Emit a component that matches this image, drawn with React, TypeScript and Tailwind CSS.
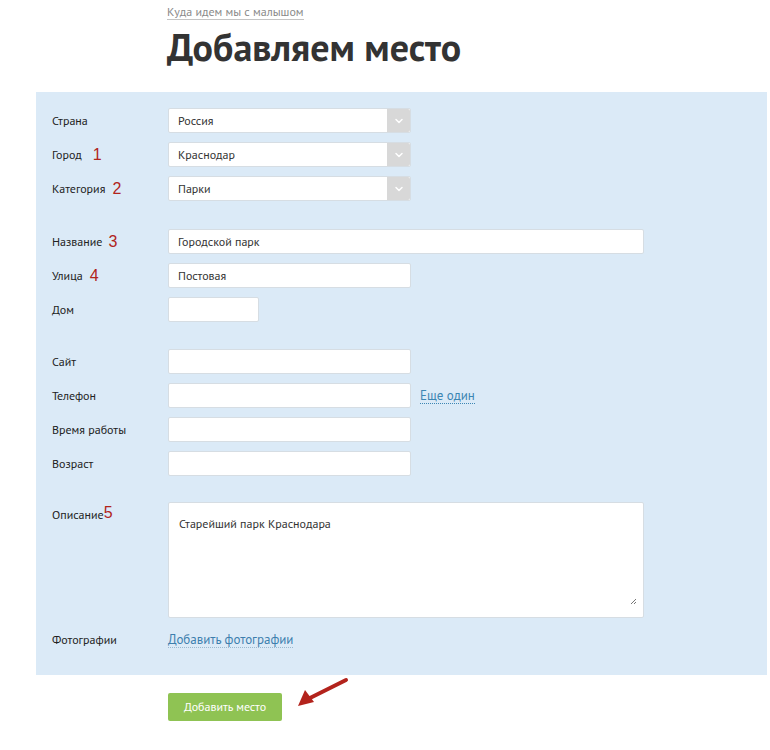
import { ChevronDown } from "lucide-react";

const font = "font-['PT_Sans','Noto_Sans','Open_Sans',sans-serif]";

const Num = ({ n, gap = "ml-[7px]" }: { n: string; gap?: string }) => (
  <span className={`${gap} font-['Liberation_Sans',sans-serif] text-[16px] leading-none text-[#b1241c]`}>{n}</span>
);

const Label = ({ children }: { children: React.ReactNode }) => (
  <div className="w-[116px] shrink-0 flex items-center text-[12px] text-[#222]">{children}</div>
);

const Select = ({ value }: { value: string }) => (
  <div className="w-[243px] h-[25px] flex bg-white rounded-[2px] border border-[#d6dde3]">
    <div className="flex-1 px-[9px] flex items-center text-[12px] text-[#333]">{value}</div>
    <div className="w-[23px] bg-[#d8d8d8] flex items-center justify-center rounded-r-[2px]">
      <ChevronDown size={12} strokeWidth={3} className="text-white" />
    </div>
  </div>
);

const Input = ({ value = "", w = "w-[243px]" }: { value?: string; w?: string }) => (
  <div className={`${w} h-[25px] bg-white rounded-[2px] border border-[#d6dde3] px-[9px] flex items-center text-[12px] text-[#333]`}>
    {value}
  </div>
);

const Row = ({ label, children }: { label: React.ReactNode; children: React.ReactNode }) => (
  <div className="flex h-[25px] items-stretch">
    <Label>{label}</Label>
    <div className="flex items-center">{children}</div>
  </div>
);

export default function App() {
  return (
    <div className={`${font} bg-white w-[770px] h-[750px] relative`}>
      <div className="pl-[167px] pt-[4px] leading-none">
        <div className="h-[16px] flex items-start">
          <a className="text-[12px] text-[#8a8a8a] border-b border-[#c4c4c4] leading-[15px]">
            Куда идем мы с малышом
          </a>
        </div>
        <h1 className="mt-[5px] text-[38px] leading-[44px] font-bold text-[#333]">
          Добавляем место
        </h1>
      </div>

      <div className="ml-[36px] mt-[23px] w-[731px] bg-[#dbeaf7] pl-[16px] pt-[16px] pb-[23px] flex flex-col">
        <div className="flex flex-col gap-[9px]">
          <Row label="Страна"><Select value="Россия" /></Row>
          <Row label={<>Город<Num n="1" gap="ml-[11px]" /></>}><Select value="Краснодар" /></Row>
          <Row label={<>Категория<Num n="2" /></>}><Select value="Парки" /></Row>
        </div>

        <div className="mt-[28px] flex flex-col gap-[9px]">
          <Row label={<>Название<Num n="3" gap="ml-[6px]" /></>}><Input value="Городской парк" w="w-[476px]" /></Row>
          <Row label={<>Улица<Num n="4" /></>}><Input value="Постовая" /></Row>
          <Row label="Дом"><Input w="w-[91px]" /></Row>
        </div>

        <div className="mt-[27px] flex flex-col gap-[9px]">
          <Row label="Сайт"><Input /></Row>
          <Row label="Телефон">
            <Input />
            <a className="ml-[9px] text-[13px] text-[#3d86b3] border-b border-dotted border-[#3d86b3] leading-[15px]">
              Еще один
            </a>
          </Row>
          <Row label="Время работы"><Input /></Row>
          <Row label="Возраст"><Input /></Row>
        </div>

        <div className="mt-[26px] flex">
          <div className="w-[116px] shrink-0 pt-[4px] text-[12px] text-[#222] flex items-start">
            Описание<span className="font-['Liberation_Sans',sans-serif] text-[16px] leading-none text-[#b1241c] -mt-[1px]">5</span>
          </div>
          <div className="relative w-[476px] h-[116px] bg-white rounded-[2px] border border-[#d6dde3] px-[10px] pt-[12px] text-[12px] text-[#333]">
            Старейший парк Краснодара
            <svg className="absolute right-[6px] bottom-[12px]" width="7" height="7" viewBox="0 0 7 7">
              <path d="M6 1L1 6M6 4L4 6" stroke="#777" strokeWidth="1" />
            </svg>
          </div>
        </div>

        <div className="mt-[9px] flex h-[25px]">
          <Label>Фотографии</Label>
          <div className="flex items-center">
            <a className="text-[13px] text-[#3d7fae] border-b border-dotted border-[#9bb9cf] leading-[15px]">
              Добавить фотографии
            </a>
          </div>
        </div>
      </div>

      <div className="pl-[168px] mt-[18px] flex items-center">
        <button className="w-[114px] h-[28px] rounded-[2px] bg-[#8fc353] text-white text-[12px]">
          Добавить место
        </button>
      </div>

      <svg className="absolute left-[292px] top-[676px]" width="58" height="34" viewBox="0 0 58 34">
        <path d="M54 4 L18 22" stroke="#b3231c" strokeWidth="4" strokeLinecap="round" />
        <path d="M6 30 L13 14 L22 26 Z" fill="#b3231c" />
      </svg>
    </div>
  );
}
